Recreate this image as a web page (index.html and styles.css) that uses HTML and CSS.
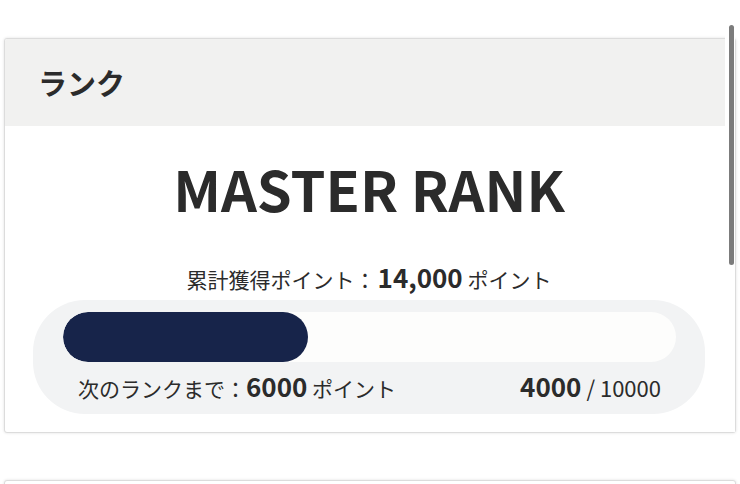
FILE: index.html
```html
<!DOCTYPE html>
<html lang="ja">
<head>
  <meta charset="UTF-8">
  <meta name="viewport" content="width=device-width, initial-scale=1.0">
  <title>ランク</title>
  <link rel="stylesheet" href="styles.css">
</head>
<body>
  <div class="page">
    <div class="card">
      <div class="card-header">
        <h2 class="card-title">ランク</h2>
      </div>
      <div class="card-body">
        <p class="rank-name">MASTER RANK</p>
        <p class="total-points">累計獲得ポイント：<span class="num">14,000</span> ポイント</p>
        <div class="progress-box">
          <div class="progress-track">
            <div class="progress-fill" style="width: 40%"></div>
          </div>
          <div class="progress-info">
            <span>次のランクまで：<span class="num">6000</span> ポイント</span>
            <span class="progress-count"><span class="num">4000</span> / 10000</span>
          </div>
        </div>
      </div>
    </div>

    <div class="card card-next"></div>
  </div>

  <div class="scrollbar">
    <div class="scroll-thumb"></div>
  </div>
</body>
</html>
```

FILE: styles.css
```css
body {
    font-family: 'Noto Sans CJK JP', 'Noto Sans', sans-serif;
    background-color: #fff;
    color: #2b2b2b;
    margin: 0;
    overflow: hidden;
}

p {
    margin: 0;
}

.page {
    padding: 38px 4px 0 4px;
}

.card {
    background-color: #fff;
    border: 1px solid #dcdcdc;
    border-radius: 3px;
    box-shadow: 0 0 3px rgba(0, 0, 0, 0.12);
    overflow: hidden;
}

.card-header {
    background-color: #f1f1f0;
    height: 87px;
    display: flex;
    align-items: center;
    padding-left: 33px;
}

.card-title {
    margin: 0;
    font-size: 29px;
    font-weight: 700;
    line-height: 1;
}

.card-body {
    padding: 34px 30px 18px 28px;
    text-align: center;
}

.rank-name {
    font-size: 56px;
    font-weight: 700;
    line-height: 1;
}

.total-points {
    margin-top: 48px;
    font-size: 21px;
    line-height: 1;
}

.total-points .num {
    font-size: 26px;
    font-weight: 700;
    margin-left: 2px;
}

.progress-box {
    margin-top: 10px;
    background-color: #f2f3f4;
    border-radius: 52px;
    padding: 12px 29px 15px 30px;
}

.progress-track {
    background-color: #fdfdfc;
    height: 50px;
    border-radius: 25px;
    overflow: hidden;
}

.progress-fill {
    background-color: #17244a;
    height: 100%;
    border-radius: 25px;
}

.progress-info {
    display: flex;
    justify-content: space-between;
    align-items: baseline;
    padding: 11px 15px 0 15px;
    font-size: 21px;
    line-height: 1;
}

.progress-info .num {
    font-size: 26px;
    font-weight: 700;
}

.progress-count {
    font-size: 22px;
}

.card-next {
    margin-top: 47px;
    height: 60px;
}

.scrollbar {
    position: absolute;
    top: 0;
    right: 5px;
    width: 10px;
    height: 432px;
    background-color: #fff;
}

.scroll-thumb {
    margin: 25px 0 0 4px;
    width: 5px;
    height: 240px;
    background-color: #7c7c7c;
    border-radius: 3px;
}
```
